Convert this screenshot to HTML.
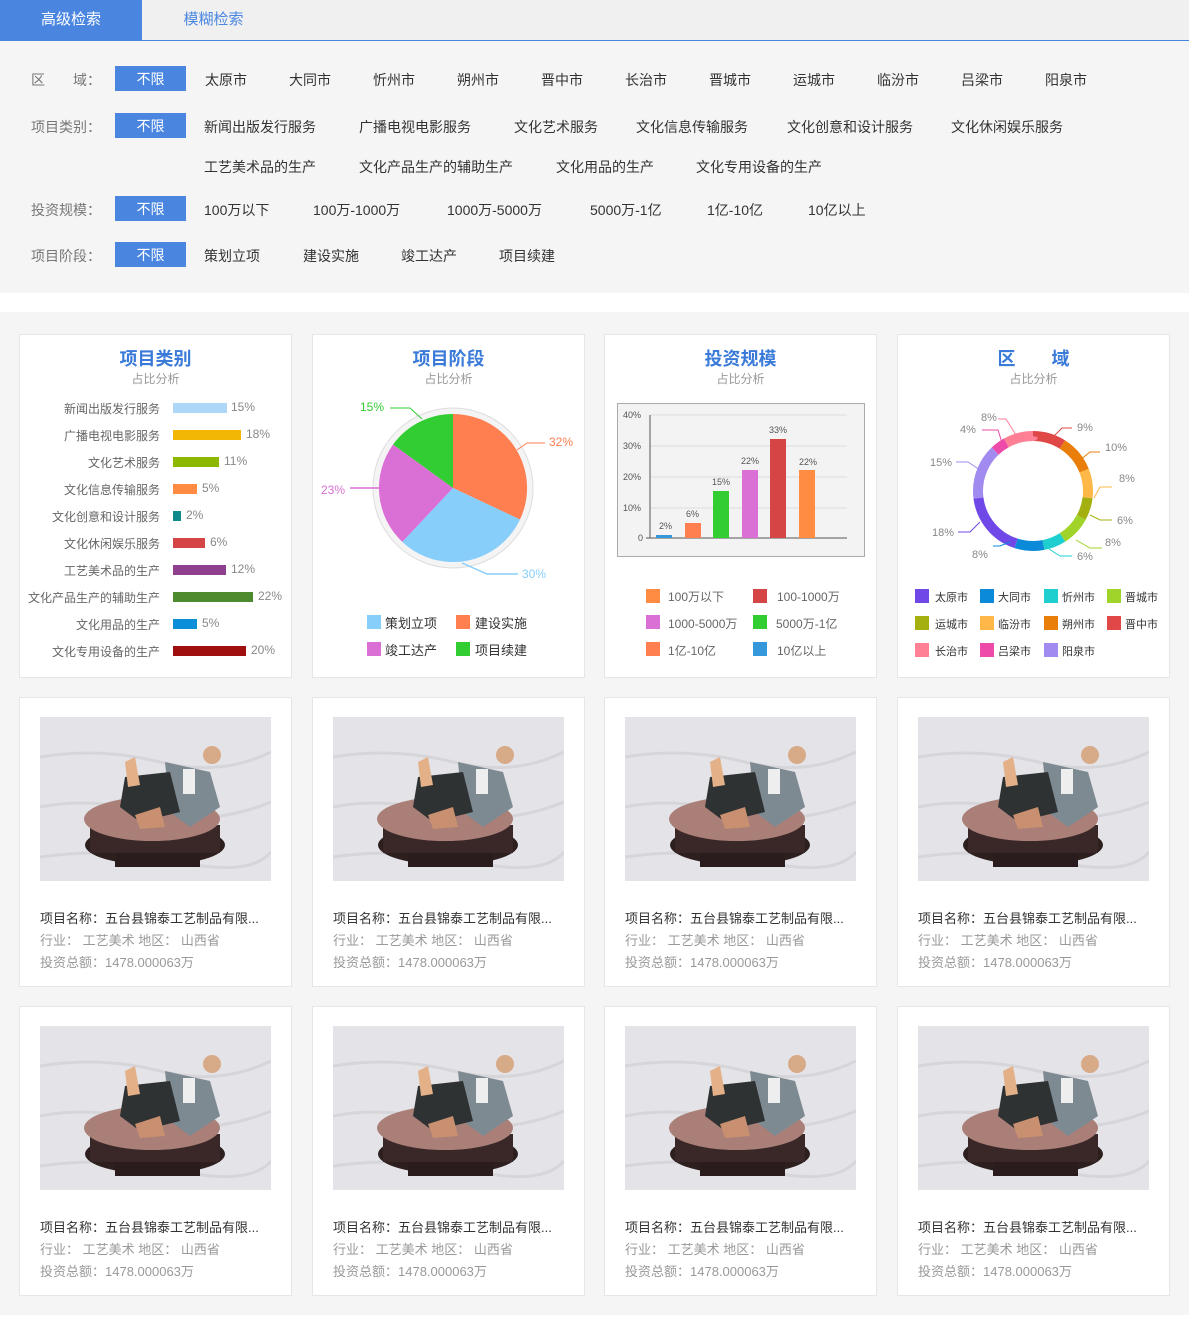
<!DOCTYPE html>
<html><head><meta charset="utf-8">
<style>
*{margin:0;padding:0;box-sizing:border-box}
body{width:1189px;height:1342px;background:#fff;font-family:"Liberation Sans","Noto Sans CJK SC",sans-serif;position:relative;overflow:hidden;color:#333}
.a{position:absolute;white-space:nowrap}
.tabs{position:absolute;left:0;top:0;width:1189px;height:41px;background:#f0f0f0;border-bottom:1px solid #4a86e0}
.filt{position:absolute;left:0;top:41px;width:1189px;height:252px;background:#f5f5f5}
.lab{position:absolute;left:31px;font-size:14px;color:#777}
.btn{position:absolute;left:115px;width:71px;height:25px;background:#4a86e0;color:#fff;font-size:14px;display:flex;align-items:center;justify-content:center;line-height:1}
.opt{position:absolute;font-size:14px;color:#333}
.panel{position:absolute;left:0;top:312px;width:1189px;height:1003px;background:#f5f5f5}
.card{position:absolute;background:#fff;border:1px solid #e6e6e6}
.ct{position:absolute;width:100%;text-align:center;top:10px;font-size:18px;color:#3a7ad8;font-weight:bold}
.cs{position:absolute;width:100%;text-align:center;top:35px;font-size:12px;color:#999}
.bl{position:absolute;right:131px;font-size:12px;color:#666;text-align:right}
.bb{position:absolute;left:153px;height:10px}
.bp{position:absolute;font-size:12px;color:#888}
.sq{position:absolute;width:14px;height:14px}
.lt{position:absolute;font-size:12px;color:#666}
.pc{position:absolute;width:273px;height:290px;background:#fff;border:1px solid #e6e6e6}
.pc svg{position:absolute;left:20px;top:19px}
.pc .t1{position:absolute;left:20px;top:210px;font-size:13px;color:#333}
.pc .t2{position:absolute;left:20px;top:232px;font-size:13px;color:#999}
.pc .t3{position:absolute;left:20px;top:254px;font-size:13px;color:#999}
</style></head><body>
<svg width="0" height="0" style="position:absolute">
<defs>
<symbol id="img" viewBox="0 0 231 164">
<rect width="231" height="164" fill="#e4e4e8"/>
<path d="M0 40 Q60 30 120 45 T231 35 M0 90 Q50 80 110 95 T231 85 M0 140 Q70 130 140 145 T231 135" stroke="#d6d6da" stroke-width="3" fill="none"/>
<ellipse cx="115" cy="128" rx="70" ry="20" fill="#2e1f1f"/>
<rect x="50" y="108" width="130" height="28" fill="#3a2828"/>
<rect x="75" y="136" width="85" height="14" fill="#2a1c1c"/>
<ellipse cx="112" cy="102" rx="68" ry="22" fill="#a97f78"/>
<path d="M125 45 L170 55 L180 90 L150 110 L130 95 Z" fill="#7e8a92"/>
<path d="M85 60 L130 55 L140 95 L100 105 L80 90 Z" fill="#2f3232"/>
<rect x="143" y="52" width="12" height="25" fill="#eee"/>
<circle cx="172" cy="38" r="9" fill="#d7aa88"/>
<path d="M85 45 L95 40 L100 68 L88 70 Z" fill="#e3b088"/>
<path d="M95 98 L120 90 L125 110 L100 112 Z" fill="#c89070"/>
</symbol>
</defs>
</svg>

<div class="tabs">
<div class="a" style="left:0;top:0;width:142px;height:41px;background:#4a86e0;color:#fff;font-size:15px;line-height:40px;text-align:center">高级检索</div>
<div class="a" style="left:142px;top:0;width:143px;height:40px;color:#4a86e0;font-size:15px;line-height:40px;text-align:center">模糊检索</div>
</div>
<div class="filt"></div>
<div class="lab" style="top:70px">区　　域：</div>
<div class="btn" style="top:66px">不限</div>
<div class="opt" style="left:205px;top:70px">太原市</div><div class="opt" style="left:289px;top:70px">大同市</div><div class="opt" style="left:373px;top:70px">忻州市</div><div class="opt" style="left:457px;top:70px">朔州市</div><div class="opt" style="left:541px;top:70px">晋中市</div><div class="opt" style="left:625px;top:70px">长治市</div><div class="opt" style="left:709px;top:70px">晋城市</div><div class="opt" style="left:793px;top:70px">运城市</div><div class="opt" style="left:877px;top:70px">临汾市</div><div class="opt" style="left:961px;top:70px">吕梁市</div><div class="opt" style="left:1045px;top:70px">阳泉市</div>
<div class="lab" style="top:117px">项目类别：</div>
<div class="btn" style="top:113px">不限</div>
<div class="opt" style="left:204px;top:117px">新闻出版发行服务</div><div class="opt" style="left:359px;top:117px">广播电视电影服务</div><div class="opt" style="left:514px;top:117px">文化艺术服务</div><div class="opt" style="left:636px;top:117px">文化信息传输服务</div><div class="opt" style="left:787px;top:117px">文化创意和设计服务</div><div class="opt" style="left:951px;top:117px">文化休闲娱乐服务</div>
<div class="opt" style="left:204px;top:157px">工艺美术品的生产</div><div class="opt" style="left:359px;top:157px">文化产品生产的辅助生产</div><div class="opt" style="left:556px;top:157px">文化用品的生产</div><div class="opt" style="left:696px;top:157px">文化专用设备的生产</div>
<div class="lab" style="top:200px">投资规模：</div>
<div class="btn" style="top:196px">不限</div>
<div class="opt" style="left:204px;top:200px">100万以下</div><div class="opt" style="left:313px;top:200px">100万-1000万</div><div class="opt" style="left:447px;top:200px">1000万-5000万</div><div class="opt" style="left:590px;top:200px">5000万-1亿</div><div class="opt" style="left:707px;top:200px">1亿-10亿</div><div class="opt" style="left:808px;top:200px">10亿以上</div>
<div class="lab" style="top:246px">项目阶段：</div>
<div class="btn" style="top:242px">不限</div>
<div class="opt" style="left:204px;top:246px">策划立项</div><div class="opt" style="left:303px;top:246px">建设实施</div><div class="opt" style="left:401px;top:246px">竣工达产</div><div class="opt" style="left:499px;top:246px">项目续建</div>

<div class="panel"></div>

<!-- chart 1 -->
<div class="card" style="left:19px;top:334px;width:273px;height:344px">
<div class="ct">项目类别</div><div class="cs">占比分析</div>
<div class="bl" style="top:65px">新闻出版发行服务</div><div class="bb" style="top:68px;width:54px;background:#aed6f7"></div><div class="bp" style="left:211px;top:65px">15%</div>
<div class="bl" style="top:92px">广播电视电影服务</div><div class="bb" style="top:95px;width:68px;background:#f2b705"></div><div class="bp" style="left:226px;top:92px">18%</div>
<div class="bl" style="top:119px">文化艺术服务</div><div class="bb" style="top:122px;width:46px;background:#8cb800"></div><div class="bp" style="left:204px;top:119px">11%</div>
<div class="bl" style="top:146px">文化信息传输服务</div><div class="bb" style="top:149px;width:24px;background:#ff8c42"></div><div class="bp" style="left:182px;top:146px">5%</div>
<div class="bl" style="top:173px">文化创意和设计服务</div><div class="bb" style="top:176px;width:8px;background:#0f8a8a"></div><div class="bp" style="left:166px;top:173px">2%</div>
<div class="bl" style="top:200px">文化休闲娱乐服务</div><div class="bb" style="top:203px;width:32px;background:#d64545"></div><div class="bp" style="left:190px;top:200px">6%</div>
<div class="bl" style="top:227px">工艺美术品的生产</div><div class="bb" style="top:230px;width:53px;background:#8e3f8e"></div><div class="bp" style="left:211px;top:227px">12%</div>
<div class="bl" style="top:254px">文化产品生产的辅助生产</div><div class="bb" style="top:257px;width:80px;background:#4e8a2e"></div><div class="bp" style="left:238px;top:254px">22%</div>
<div class="bl" style="top:281px">文化用品的生产</div><div class="bb" style="top:284px;width:24px;background:#0a8ed8"></div><div class="bp" style="left:182px;top:281px">5%</div>
<div class="bl" style="top:308px">文化专用设备的生产</div><div class="bb" style="top:311px;width:73px;background:#a00f0f"></div><div class="bp" style="left:231px;top:308px">20%</div>
</div>

<!-- chart 2 -->
<div class="card" style="left:312px;top:334px;width:273px;height:344px">
<div class="ct">项目阶段</div><div class="cs">占比分析</div>
</div>
<svg class="a" style="left:0;top:0" width="1189" height="700">
<circle cx="453" cy="488" r="80" fill="#f4f4f4" stroke="#ddd" stroke-width="1"/>
<path d="M453 488 L453 414 A74 74 0 0 1 520 519.5 Z" fill="#ff7f50"/>
<path d="M453 488 L520 519.5 A74 74 0 0 1 402.3 541.9 Z" fill="#87cefa"/>
<path d="M453 488 L402.3 541.9 A74 74 0 0 1 393.1 444.5 Z" fill="#da70d6"/>
<path d="M453 488 L393.1 444.5 A74 74 0 0 1 453 414 Z" fill="#32cd32"/>
<polyline points="422,419 410,408 390,408" fill="none" stroke="#32cd32"/>
<polyline points="517,450 527,443 545,443" fill="none" stroke="#ff7f50"/>
<polyline points="380,488 350,488" fill="none" stroke="#da70d6" stroke-width="1.5"/>
<polyline points="462,563 487,574 518,574" fill="none" stroke="#87cefa" stroke-width="1.5"/>
<text x="360" y="411" font-size="12" fill="#32cd32" font-family="Liberation Sans">15%</text>
<text x="549" y="446" font-size="12" fill="#ff7f50" font-family="Liberation Sans">32%</text>
<text x="321" y="494" font-size="12" fill="#da70d6" font-family="Liberation Sans">23%</text>
<text x="522" y="578" font-size="12" fill="#87cefa" font-family="Liberation Sans">30%</text>
</svg>
<div class="sq" style="left:367px;top:615px;background:#87cefa"></div><div class="a" style="left:385px;top:613px;font-size:13px">策划立项</div>
<div class="sq" style="left:456px;top:615px;background:#ff7f50"></div><div class="a" style="left:475px;top:613px;font-size:13px">建设实施</div>
<div class="sq" style="left:367px;top:642px;background:#da70d6"></div><div class="a" style="left:385px;top:640px;font-size:13px">竣工达产</div>
<div class="sq" style="left:456px;top:642px;background:#32cd32"></div><div class="a" style="left:475px;top:640px;font-size:13px">项目续建</div>

<!-- chart 3 -->
<div class="card" style="left:604px;top:334px;width:273px;height:344px">
<div class="ct">投资规模</div><div class="cs">占比分析</div>
</div>
<svg class="a" style="left:617px;top:403px" width="248" height="154" font-family="Liberation Sans" font-size="9" fill="#555">
<rect x="0.5" y="0.5" width="247" height="153" fill="#f3f3f3" stroke="#aaa"/>
<g stroke="#ddd"><line x1="33" y1="12" x2="230" y2="12"/><line x1="33" y1="43" x2="230" y2="43"/><line x1="33" y1="74" x2="230" y2="74"/><line x1="33" y1="105" x2="230" y2="105"/></g>
<line x1="33" y1="12" x2="33" y2="135" stroke="#555"/><line x1="29" y1="135" x2="230" y2="135" stroke="#555"/>
<text x="6" y="15">40%</text><text x="6" y="46">30%</text><text x="6" y="77">20%</text><text x="6" y="108">10%</text><text x="21" y="138">0</text>
<rect x="39" y="132" width="16" height="3" fill="#3498db"/>
<rect x="68" y="120" width="16" height="15" fill="#ff7f50"/>
<rect x="96" y="88" width="16" height="47" fill="#32cd32"/>
<rect x="125" y="67" width="16" height="68" fill="#da70d6"/>
<rect x="153" y="36" width="16" height="99" fill="#d64545"/>
<rect x="182" y="67" width="16" height="68" fill="#ff8c42"/>
<text x="42" y="126">2%</text><text x="69" y="114">6%</text><text x="95" y="82">15%</text><text x="124" y="61">22%</text><text x="152" y="30">33%</text><text x="182" y="62">22%</text>
</svg>
<div class="sq" style="left:646px;top:589px;background:#ff8c42"></div><div class="lt" style="left:668px;top:588px">100万以下</div>
<div class="sq" style="left:753px;top:589px;background:#d64545"></div><div class="lt" style="left:777px;top:588px">100-1000万</div>
<div class="sq" style="left:646px;top:615px;background:#da70d6"></div><div class="lt" style="left:668px;top:615px">1000-5000万</div>
<div class="sq" style="left:753px;top:615px;background:#32cd32"></div><div class="lt" style="left:776px;top:615px">5000万-1亿</div>
<div class="sq" style="left:646px;top:642px;background:#ff7f50"></div><div class="lt" style="left:668px;top:642px">1亿-10亿</div>
<div class="sq" style="left:753px;top:642px;background:#3498db"></div><div class="lt" style="left:777px;top:642px">10亿以上</div>

<!-- chart 4 -->
<div class="card" style="left:897px;top:334px;width:273px;height:344px">
<div class="ct">区　　域</div><div class="cs">占比分析</div>
</div>
<svg class="a" style="left:0;top:0" width="1189" height="700" font-family="Liberation Sans" font-size="11" fill="#888">
<g transform="rotate(-90 1033 491)" fill="none" stroke-width="10">
<circle cx="1033" cy="491" r="55" pathLength="100" stroke="#e04848" stroke-dasharray="9 91" stroke-dashoffset="0"/>
<circle cx="1033" cy="491" r="55" pathLength="100" stroke="#ea7e0a" stroke-dasharray="10 90" stroke-dashoffset="-9"/>
<circle cx="1033" cy="491" r="55" pathLength="100" stroke="#ffb848" stroke-dasharray="8 92" stroke-dashoffset="-19"/>
<circle cx="1033" cy="491" r="55" pathLength="100" stroke="#a4b00f" stroke-dasharray="6 94" stroke-dashoffset="-27"/>
<circle cx="1033" cy="491" r="55" pathLength="100" stroke="#a0d42a" stroke-dasharray="8 92" stroke-dashoffset="-33"/>
<circle cx="1033" cy="491" r="55" pathLength="100" stroke="#1fcfcf" stroke-dasharray="6 94" stroke-dashoffset="-41"/>
<circle cx="1033" cy="491" r="55" pathLength="100" stroke="#0a8ad8" stroke-dasharray="8 92" stroke-dashoffset="-47"/>
<circle cx="1033" cy="491" r="55" pathLength="100" stroke="#7048e8" stroke-dasharray="18 82" stroke-dashoffset="-55"/>
<circle cx="1033" cy="491" r="55" pathLength="100" stroke="#a18af0" stroke-dasharray="15 85" stroke-dashoffset="-73"/>
<circle cx="1033" cy="491" r="55" pathLength="100" stroke="#ee4aa9" stroke-dasharray="4 96" stroke-dashoffset="-88"/>
<circle cx="1033" cy="491" r="55" pathLength="100" stroke="#ff7f94" stroke-dasharray="8 92" stroke-dashoffset="-92"/>
</g>
<polyline points="1052,438 1062,428 1072,428" fill="none" stroke="#e04848"/>
<polyline points="1080,460 1090,452 1100,452" fill="none" stroke="#ea7e0a"/>
<polyline points="1094,498 1100,487 1112,487" fill="none" stroke="#ffb848"/>
<polyline points="1090,515 1100,520 1112,520" fill="none" stroke="#a4b00f"/>
<polyline points="1076,540 1090,548 1102,548" fill="none" stroke="#a0d42a"/>
<polyline points="1049,549 1060,556 1072,556" fill="none" stroke="#1fcfcf"/>
<polyline points="1010,542 1000,546 993,546" fill="none" stroke="#0a8ad8"/>
<polyline points="980,522 970,532 958,532" fill="none" stroke="#7048e8"/>
<polyline points="980,470 968,462 956,462" fill="none" stroke="#a18af0"/>
<polyline points="1003,446 998,430 982,430" fill="none" stroke="#ee4aa9"/>
<polyline points="1016,435 1006,419 998,419" fill="none" stroke="#ff7f94"/>
<text x="1077" y="431">9%</text><text x="1105" y="451">10%</text><text x="1119" y="482">8%</text><text x="1117" y="524">6%</text><text x="1105" y="546">8%</text><text x="1077" y="560">6%</text>
<text x="972" y="558">8%</text><text x="932" y="536">18%</text><text x="930" y="466">15%</text><text x="960" y="433">4%</text><text x="981" y="421">8%</text>
</svg>
<div style="position:absolute;left:915px;top:589px;font-size:11px;color:#333">
<div class="sq" style="left:0;top:0;background:#7048e8"></div><div class="a" style="left:20px;top:0">太原市</div>
<div class="sq" style="left:65px;top:0;background:#0a8ad8"></div><div class="a" style="left:83px;top:0">大同市</div>
<div class="sq" style="left:129px;top:0;background:#1fcfcf"></div><div class="a" style="left:147px;top:0">忻州市</div>
<div class="sq" style="left:192px;top:0;background:#a0d42a"></div><div class="a" style="left:210px;top:0">晋城市</div>
<div class="sq" style="left:0;top:27px;background:#a4b00f"></div><div class="a" style="left:20px;top:27px">运城市</div>
<div class="sq" style="left:65px;top:27px;background:#ffb848"></div><div class="a" style="left:83px;top:27px">临汾市</div>
<div class="sq" style="left:129px;top:27px;background:#ea7e0a"></div><div class="a" style="left:147px;top:27px">朔州市</div>
<div class="sq" style="left:192px;top:27px;background:#e04848"></div><div class="a" style="left:210px;top:27px">晋中市</div>
<div class="sq" style="left:0;top:54px;background:#ff7f94"></div><div class="a" style="left:20px;top:54px">长治市</div>
<div class="sq" style="left:65px;top:54px;background:#ee4aa9"></div><div class="a" style="left:83px;top:54px">吕梁市</div>
<div class="sq" style="left:129px;top:54px;background:#a18af0"></div><div class="a" style="left:147px;top:54px">阳泉市</div>
</div>

<!-- product cards -->
<div class="pc" style="left:19px;top:697px"><svg width="231" height="164"><use href="#img"/></svg><div class="t1">项目名称：五台县锦泰工艺制品有限...</div><div class="t2">行业： 工艺美术 地区： 山西省</div><div class="t3">投资总额：1478.000063万</div></div>
<div class="pc" style="left:312px;top:697px"><svg width="231" height="164"><use href="#img"/></svg><div class="t1">项目名称：五台县锦泰工艺制品有限...</div><div class="t2">行业： 工艺美术 地区： 山西省</div><div class="t3">投资总额：1478.000063万</div></div>
<div class="pc" style="left:604px;top:697px"><svg width="231" height="164"><use href="#img"/></svg><div class="t1">项目名称：五台县锦泰工艺制品有限...</div><div class="t2">行业： 工艺美术 地区： 山西省</div><div class="t3">投资总额：1478.000063万</div></div>
<div class="pc" style="left:897px;top:697px"><svg width="231" height="164"><use href="#img"/></svg><div class="t1">项目名称：五台县锦泰工艺制品有限...</div><div class="t2">行业： 工艺美术 地区： 山西省</div><div class="t3">投资总额：1478.000063万</div></div>
<div class="pc" style="left:19px;top:1006px"><svg width="231" height="164"><use href="#img"/></svg><div class="t1">项目名称：五台县锦泰工艺制品有限...</div><div class="t2">行业： 工艺美术 地区： 山西省</div><div class="t3">投资总额：1478.000063万</div></div>
<div class="pc" style="left:312px;top:1006px"><svg width="231" height="164"><use href="#img"/></svg><div class="t1">项目名称：五台县锦泰工艺制品有限...</div><div class="t2">行业： 工艺美术 地区： 山西省</div><div class="t3">投资总额：1478.000063万</div></div>
<div class="pc" style="left:604px;top:1006px"><svg width="231" height="164"><use href="#img"/></svg><div class="t1">项目名称：五台县锦泰工艺制品有限...</div><div class="t2">行业： 工艺美术 地区： 山西省</div><div class="t3">投资总额：1478.000063万</div></div>
<div class="pc" style="left:897px;top:1006px"><svg width="231" height="164"><use href="#img"/></svg><div class="t1">项目名称：五台县锦泰工艺制品有限...</div><div class="t2">行业： 工艺美术 地区： 山西省</div><div class="t3">投资总额：1478.000063万</div></div>
</body></html>
